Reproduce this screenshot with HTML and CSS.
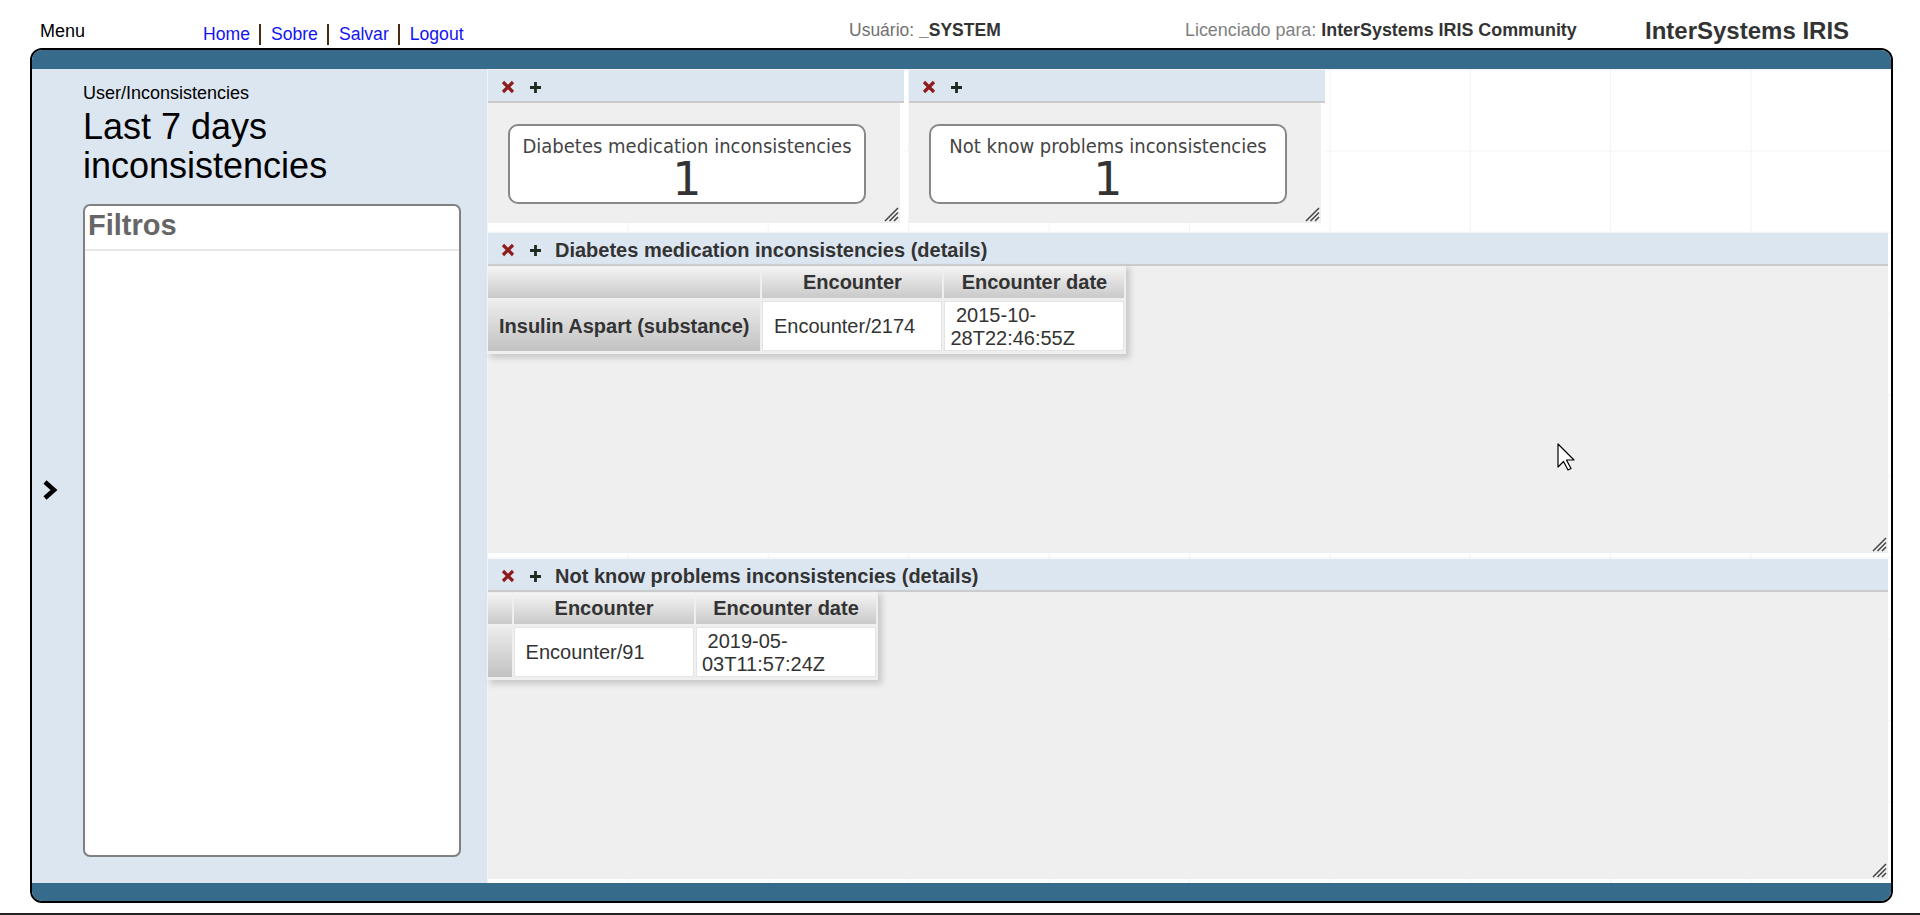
FILE: index.html
```html
<!DOCTYPE html>
<html lang="pt">
<head>
<meta charset="utf-8">
<title>Last 7 days inconsistencies</title>
<link rel="stylesheet" href="styles.css">
</head>
<body>
<header class="topbar">
  <div class="menu">Menu</div>
  <nav class="links"><a class="link">Home</a><a class="link">Sobre</a><a class="link">Salvar</a><a class="link">Logout</a></nav>
  <div class="user">Usuário: <b>_SYSTEM</b></div>
  <div class="license">Licenciado para: <b>InterSystems IRIS Community</b></div>
  <div class="brand">InterSystems IRIS</div>
</header>

<div class="frame">
  <div class="band"></div>
  <div class="main">
    <aside class="sidebar">
      <div class="toggle">
        <svg class="chev" width="16" height="22" viewBox="0 0 16 22"><polyline points="3,3 12,11 3,19" fill="none" stroke="#000" stroke-width="4.6" stroke-linejoin="miter"/></svg>
      </div>
      <div class="sidepanel">
        <div class="crumb">User/Inconsistencies</div>
        <h1 class="title">Last 7 days inconsistencies</h1>
        <div class="filters">
          <div class="filters-head">Filtros</div>
        </div>
      </div>
    </aside>

    <section class="dash">
      <div class="widget small w1">
        <div class="whead">
          <svg class="ico" width="14" height="14" viewBox="0 0 14 14"><path d="M2 2 L12 12 M12 2 L2 12" stroke="#8e1c1c" stroke-width="3.2"/></svg>
          <svg class="ico plus" width="13" height="13" viewBox="0 0 13 13"><path d="M6.5 1 V12 M1 6.5 H12" stroke="#1d2a1d" stroke-width="2.8"/></svg>
        </div>
        <div class="wbody">
          <div class="kpi">
            <div class="kpi-label">Diabetes medication inconsistencies</div>
            <div class="kpi-value">1</div>
          </div>
          <svg class="grip" width="16" height="16" viewBox="0 0 16 16"><path d="M15 2 L2 15 M15 6.5 L6.5 15 M15 11 L11 15" stroke="#444" stroke-width="1.5"/></svg>
        </div>
      </div>

      <div class="widget small w2">
        <div class="whead">
          <svg class="ico" width="14" height="14" viewBox="0 0 14 14"><path d="M2 2 L12 12 M12 2 L2 12" stroke="#8e1c1c" stroke-width="3.2"/></svg>
          <svg class="ico plus" width="13" height="13" viewBox="0 0 13 13"><path d="M6.5 1 V12 M1 6.5 H12" stroke="#1d2a1d" stroke-width="2.8"/></svg>
        </div>
        <div class="wbody">
          <div class="kpi">
            <div class="kpi-label">Not know problems inconsistencies</div>
            <div class="kpi-value">1</div>
          </div>
          <svg class="grip" width="16" height="16" viewBox="0 0 16 16"><path d="M15 2 L2 15 M15 6.5 L6.5 15 M15 11 L11 15" stroke="#444" stroke-width="1.5"/></svg>
        </div>
      </div>

      <div class="widget detail d1">
        <div class="whead">
          <svg class="ico" width="14" height="14" viewBox="0 0 14 14"><path d="M2 2 L12 12 M12 2 L2 12" stroke="#8e1c1c" stroke-width="3.2"/></svg>
          <svg class="ico plus" width="13" height="13" viewBox="0 0 13 13"><path d="M6.5 1 V12 M1 6.5 H12" stroke="#1d2a1d" stroke-width="2.8"/></svg>
          <span class="wtitle">Diabetes medication inconsistencies (details)</span>
        </div>
        <div class="wbody">
          <table class="pivot">
            <tr><th class="corner"></th><th class="colh">Encounter</th><th class="colh">Encounter date</th></tr>
            <tr><td class="rowh">Insulin Aspart (substance)</td><td class="cell">&nbsp;Encounter/2174</td><td class="cell">&nbsp;2015-10-28T22:46:55Z</td></tr>
          </table>
          <svg class="grip" width="16" height="16" viewBox="0 0 16 16"><path d="M15 2 L2 15 M15 6.5 L6.5 15 M15 11 L11 15" stroke="#444" stroke-width="1.5"/></svg>
        </div>
      </div>

      <div class="widget detail d2">
        <div class="whead">
          <svg class="ico" width="14" height="14" viewBox="0 0 14 14"><path d="M2 2 L12 12 M12 2 L2 12" stroke="#8e1c1c" stroke-width="3.2"/></svg>
          <svg class="ico plus" width="13" height="13" viewBox="0 0 13 13"><path d="M6.5 1 V12 M1 6.5 H12" stroke="#1d2a1d" stroke-width="2.8"/></svg>
          <span class="wtitle">Not know problems inconsistencies (details)</span>
        </div>
        <div class="wbody">
          <table class="pivot">
            <tr><th class="corner narrow"></th><th class="colh">Encounter</th><th class="colh">Encounter date</th></tr>
            <tr><td class="rowh narrow"></td><td class="cell">&nbsp;Encounter/91</td><td class="cell">&nbsp;2019-05-03T11:57:24Z</td></tr>
          </table>
          <svg class="grip" width="16" height="16" viewBox="0 0 16 16"><path d="M15 2 L2 15 M15 6.5 L6.5 15 M15 11 L11 15" stroke="#444" stroke-width="1.5"/></svg>
        </div>
      </div>
    </section>
  </div>
  <div class="band bottom"></div>
</div>
<div class="pagefoot"></div>

<svg class="cursor" width="19" height="28" viewBox="0 0 19 28"><polygon points="1,1 1,24 6.5,18.5 11,27 14,25.5 9.5,17 17,17" fill="#fff" stroke="#000" stroke-width="1.2" stroke-linejoin="round"/></svg>
</body>
</html>
```

FILE: styles.css
```css
html, body {
  margin: 0;
  padding: 0;
  height: 915px;
  overflow: hidden;
  background: #fff;
  font-family: "Liberation Sans", Arial, sans-serif;
  color: #333;
}

/* ---------- top bar ---------- */
.topbar {
  display: flex;
  align-items: flex-start;
  height: 48px;
}
.menu {
  margin-left: 40px;
  width: 163px;
  padding-top: 21px;
  font-size: 18px;
  line-height: 21px;
  color: #000;
}
.links {
  width: 646px;
  padding-top: 24px;
  display: flex;
}
.link {
  font-size: 17.6px;
  line-height: 21px;
  color: #1414f0;
  padding: 0 9px 0 10px;
  border-left: 2px solid #4a2a10;
  cursor: pointer;
}
.link:first-child {
  border-left: none;
  padding-left: 0;
}
.user {
  width: 336px;
  padding-top: 20px;
  font-size: 17.5px;
  line-height: 20px;
  color: #707070;
}
.user b, .license b {
  color: #333;
}
.license {
  width: 460px;
  padding-top: 20px;
  font-size: 17.9px;
  line-height: 20px;
  color: #808080;
}
.brand {
  padding-top: 17px;
  font-size: 24px;
  line-height: 28px;
  font-weight: bold;
  color: #333;
}

/* ---------- frame ---------- */
.frame {
  margin-left: 30px;
  width: 1859px;
  border: 2px solid #000;
  border-radius: 12px;
  overflow: hidden;
}
.band {
  height: 19px;
  background: #366b8c;
}
.band.bottom {
  height: 18px;
}
.main {
  display: flex;
  height: 814px;
}

/* ---------- sidebar ---------- */
.sidebar {
  width: 455px;
  flex: none;
  display: flex;
  background: #dce6f0;
}
.toggle {
  width: 51px;
  display: flex;
  align-items: center;
  padding: 28px 0 0 10px;
  box-sizing: border-box;
}
.sidepanel {
  width: 378px;
  padding-top: 14px;
}
.crumb {
  font-size: 18px;
  line-height: 20px;
  color: #000;
}
.title {
  margin: 4px 0 0;
  font-size: 36px;
  line-height: 39px;
  font-weight: normal;
  color: #000;
}
.filters {
  margin-top: 19px;
  height: 653px;
  box-sizing: border-box;
  border: 2px solid #808080;
  border-radius: 7px;
  background: #fff;
}
.filters-head {
  height: 45px;
  padding: 3px 0 0 3px;
  box-sizing: border-box;
  border-bottom: 2px solid #e6e6e6;
  font-size: 29px;
  line-height: 33px;
  font-weight: bold;
  color: #666;
}

/* ---------- dashboard ---------- */
.dash {
  flex: 1;
  display: grid;
  grid-template-columns: 421px 421px 1fr;
  grid-template-rows: 163px 325px 326px;
  background-color: #fff;
  background-image:
    linear-gradient(to right, #f3f3f3 1px, transparent 1px),
    linear-gradient(to bottom, #f3f3f3 1px, transparent 1px);
  background-size: 140.4px 81.4px;
}
.widget {
  display: flex;
  flex-direction: column;
  min-height: 0;
  background: #fff;
}
.small {
  margin: 1px 4px 9px 1px;
}
.w1 { grid-column: 1; grid-row: 1; }
.w2 { grid-column: 2; grid-row: 1; }
.detail {
  margin: 1px 3px 4px 1px;
  grid-column: 1 / 4;
}
.d1 { grid-row: 2; }
.d2 { grid-row: 3; margin-top: 2px; }

.whead {
  flex: none;
  box-sizing: border-box;
  height: 33px;
  padding: 3px 0 0 13px;
  display: flex;
  align-items: center;
  background: #dce6f0;
  border-bottom: 2px solid #cbcbcb;
}
.ico {
  display: block;
}
.plus {
  margin-left: 14px;
}
.wtitle {
  margin-left: 13px;
  font-size: 20px;
  font-weight: bold;
  color: #333;
  white-space: nowrap;
}
.wbody {
  flex: 1;
  position: relative;
  background: #efefef;
}
.small .wbody {
  margin-right: 4px;
}
.grip {
  position: absolute;
  right: 1px;
  bottom: 1px;
}

/* KPI tile */
.kpi {
  margin: 21px 0 0 20px;
  width: 358px;
  height: 80px;
  box-sizing: border-box;
  border: 2px solid #888;
  border-radius: 10px;
  background: #fff;
  text-align: center;
}
.kpi-label {
  padding-top: 9px;
  font-family: "DejaVu Sans Condensed", "Liberation Sans", sans-serif;
  font-size: 20px;
  line-height: 22px;
  white-space: nowrap;
  color: #444;
}
.kpi-value {
  font-family: "DejaVu Sans", sans-serif;
  font-size: 46px;
  line-height: 44px;
  color: #333;
}

/* pivot table */
.pivot {
  margin: -2px 0 0 -2px;
  border-collapse: separate;
  border-spacing: 2px 3px;
  box-shadow: 4px 4px 6px rgba(0, 0, 0, 0.16);
  font-size: 20px;
  color: #333;
}
.pivot .colh {
  height: 31px;
  width: 180px;
  padding: 0;
  font-weight: bold;
  text-align: center;
  background: linear-gradient(#f4f4f4, #c9c9c9);
}
.pivot .corner {
  padding: 0;
  background: linear-gradient(#f4f4f4, #c9c9c9);
}
.pivot .rowh {
  height: 50px;
  padding: 0 11px;
  font-weight: bold;
  white-space: nowrap;
  background: linear-gradient(#ececec, #c2c2c2);
}
.pivot .narrow {
  width: 24px;
  padding: 0;
}
.pivot .cell {
  width: 180px;
  padding: 1px 5px 0;
  line-height: 23px;
  background: #fff;
  border: 1px solid #e4e4e4;
  box-sizing: border-box;
  text-align: left;
}

.pagefoot {
  margin-top: 10px;
  border-top: 2px solid #222;
}

.cursor {
  position: absolute;
  left: 1557px;
  top: 443px;
}
```
